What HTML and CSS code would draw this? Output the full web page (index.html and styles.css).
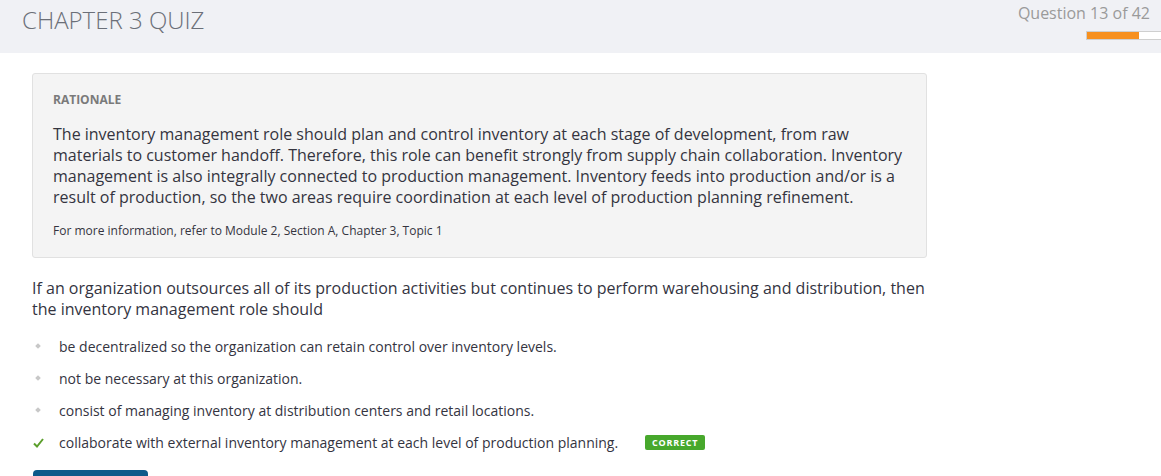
FILE: index.html
```html
<!DOCTYPE html>
<html>
<head>
<meta charset="utf-8">
<link rel="stylesheet" href="styles.css">
</head>
<body>
<header class="top">
  <h1 class="title">CHAPTER 3 QUIZ</h1>
  <div class="progress">
    <div class="count">Question 13 of 42</div>
    <div class="bar"><div class="fill" style="width:52px"></div></div>
  </div>
</header>
<main class="content">
  <section class="rationale">
    <div class="label">RATIONALE</div>
    <p class="rtext">The inventory management role should plan and control inventory at each stage of development, from raw materials to customer handoff. Therefore, this role can benefit strongly from supply chain collaboration. Inventory management is also integrally connected to production management. Inventory feeds into production and/or is a result of production, so the two areas require coordination at each level of production planning refinement.</p>
    <p class="ref">For more information, refer to Module 2, Section A, Chapter 3, Topic 1</p>
  </section>
  <p class="question">If an organization outsources all of its production activities but continues to perform warehousing and distribution, then the inventory management role should</p>
  <ul class="options">
    <li class="opt"><span class="mark"><span class="dot"></span></span><span class="otext">be decentralized so the organization can retain control over inventory levels.</span></li>
    <li class="opt"><span class="mark"><span class="dot"></span></span><span class="otext">not be necessary at this organization.</span></li>
    <li class="opt"><span class="mark"><span class="dot"></span></span><span class="otext">consist of managing inventory at distribution centers and retail locations.</span></li>
    <li class="opt"><span class="mark"><svg class="check" width="11" height="10" viewBox="0 0 11 10"><path d="M1 5.5 L4 8.5 L10 1" fill="none" stroke="#5b9f2c" stroke-width="2"/></svg></span><span class="otext">collaborate with external inventory management at each level of production planning.</span><span class="badge">CORRECT</span></li>
  </ul>
  <button class="next" aria-label="Next"></button>
</main>
</body>
</html>
```

FILE: styles.css
```css
html, body {
  margin: 0;
  padding: 0;
  background: #ffffff;
  font-family: "Open Sans", "Liberation Sans", sans-serif;
  overflow: hidden;
}
.top {
  height: 53px;
  background: #f0f1f5;
  display: flex;
  justify-content: space-between;
  align-items: flex-start;
}
.title {
  margin: 4px 0 0 22px;
  font-size: 24px;
  font-weight: 300;
  color: #6b6f78;
  line-height: 32px;
}
.progress {
  display: flex;
  flex-direction: column;
  align-items: flex-end;
}
.count {
  margin: 2px 11px 0 0;
  font-size: 16px;
  color: #9a9a9a;
  line-height: 22px;
}
.bar {
  margin-top: 7px;
  width: 74px;
  height: 7px;
  background: #ffffff;
  border: 1px solid #cfcfcf;
  border-right: none;
}
.fill {
  height: 100%;
  background: #f7901e;
}
.content {
  width: 895px;
  margin: 20px 0 0 32px;
}
.rationale {
  background: #f4f4f4;
  border: 1px solid #e1e1e1;
  border-radius: 3px;
  padding: 18px 20px 18px 20px;
}
.label {
  font-size: 12px;
  font-weight: 700;
  color: #7a7a7a;
  line-height: 16px;
}
.rtext {
  margin: 16px 0 0 0;
  font-size: 16px;
  line-height: 21px;
  color: #34343f;
}
.ref {
  margin: 15px 0 0 0;
  font-size: 12px;
  line-height: 16px;
  color: #34343f;
}
.question {
  margin: 20px 0 0 0;
  font-size: 16px;
  line-height: 21px;
  color: #34343f;
}
.options {
  list-style: none;
  margin: 16px 0 0 0;
  padding: 0;
}
.opt {
  display: flex;
  align-items: center;
  height: 20px;
  margin-bottom: 12px;
  font-size: 14px;
  color: #34343f;
}
.mark {
  width: 26px;
  display: flex;
  align-items: center;
  padding-left: 1px;
}
.dot {
  display: block;
  width: 4px;
  height: 4px;
  margin-left: 3px;
  background: #c8c8c8;
  transform: rotate(45deg);
}
.check {
  display: block;
  margin-top: 2px;
}
.badge {
  margin-left: 27px;
  background: #47a82c;
  color: #ffffff;
  font-size: 9px;
  font-weight: 700;
  letter-spacing: 0.8px;
  line-height: 15px;
  height: 15px;
  width: 60px;
  text-align: center;
  border-radius: 2px;
  margin-top: 1px;
}
.next {
  display: block;
  margin: 18px 0 0 1px;
  width: 115px;
  height: 36px;
  background: #0d5a8a;
  border: none;
  border-radius: 4px;
}
```
